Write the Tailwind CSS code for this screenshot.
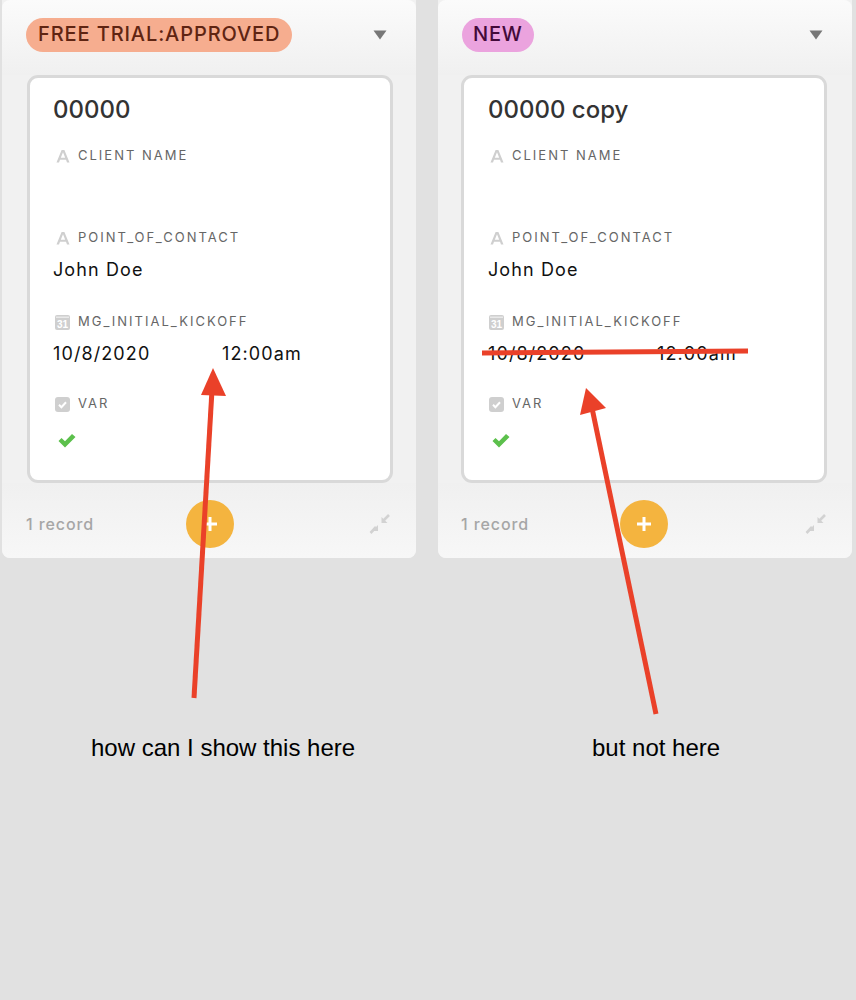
<!doctype html>
<html>
<head>
<meta charset="utf-8">
<script src="https://cdn.jsdelivr.net/npm/@tailwindcss/browser@4"></script>
</head>
<body class="relative w-[856px] h-[1000px] overflow-hidden bg-[#e1e1e1] font-['Inter',sans-serif]">

<div class="flex gap-[22px] pl-[2px]">

  <!-- left column -->
  <div class="w-[414px] h-[558px] rounded-b-lg flex flex-col bg-[#f1f1f1]">
    <div class="h-[75px] shrink-0 pl-6 pr-[29px] pt-[18px] flex items-start justify-between rounded-t-lg bg-gradient-to-b from-[#fbfbfb] to-[#f0f0f0]">
      <span class="h-[34px] px-3 rounded-full bg-[#f6ad8f] text-[#5f2412] text-[20px] leading-[32px] font-medium tracking-[0.9px] whitespace-nowrap">FREE TRIAL:APPROVED</span>
      <svg class="mt-3" width="14" height="10" viewBox="0 0 14 10"><path d="M0.5 0.5H13.5L7 9.5Z" fill="#777"/></svg>
    </div>
    <div class="ml-[25px] mr-[23px] h-[408px] shrink-0 rounded-[11px] border-[3px] border-[#d9d9d9] bg-white pl-6 pt-[17px]">
      <div class="-ml-px text-[24px] leading-[30px] font-medium text-[#333]">00000</div>
      <div class="mt-[21px] flex items-center h-5 text-[13px] tracking-[2px] text-[#666]">
        <svg class="ml-[2px] mr-[8px]" width="14" height="14" viewBox="0 0 14 14"><path d="M5.6 1H8.4L13.5 13.5H11L10 10.8H4L3 13.5H0.5ZM4.8 8.7H9.2L7 3.2Z" fill="#cfcfcf" fill-rule="evenodd"/></svg>
        CLIENT NAME
      </div>
      <div class="mt-[62px] flex items-center h-5 text-[13px] tracking-[2px] text-[#666]">
        <svg class="ml-[2px] mr-[8px]" width="14" height="14" viewBox="0 0 14 14"><path d="M5.6 1H8.4L13.5 13.5H11L10 10.8H4L3 13.5H0.5ZM4.8 8.7H9.2L7 3.2Z" fill="#cfcfcf" fill-rule="evenodd"/></svg>
        POINT_OF_CONTACT
      </div>
      <div class="mt-[10px] -ml-px text-[18px] leading-6 tracking-[1.1px] text-[#111]">John Doe</div>
      <div class="mt-[30px] flex items-center h-5 text-[13px] tracking-[2px] text-[#666]">
        <svg class="ml-[1px] mr-[8px]" width="15" height="15" viewBox="0 0 15 15"><rect width="15" height="15" rx="2" fill="#cfcfcf"/><rect x="1" y="1.5" width="13" height="1.5" fill="#e9e9e9"/><text x="2" y="12.8" font-size="10" font-weight="700" letter-spacing="0" fill="#fff" font-family="Liberation Sans">31</text></svg>
        MG_INITIAL_KICKOFF
      </div>
      <div class="mt-[10px] -ml-px flex text-[18px] leading-6 tracking-[1.1px] text-[#111]">
        <span class="w-[169px]">10/8/2020</span><span>12:00am</span>
      </div>
      <div class="mt-[28px] flex items-center h-5 text-[13px] tracking-[2px] text-[#666]">
        <svg class="ml-[1px] mr-[8px]" width="15" height="15" viewBox="0 0 15 15"><rect width="15" height="15" rx="3" fill="#cfcfcf"/><path d="M4 7.8L6.4 10.2L11 5.3" fill="none" stroke="#fff" stroke-width="2"/></svg>
        VAR
      </div>
      <svg class="mt-[19px] ml-[4px]" width="18" height="15" viewBox="0 0 18 15"><path d="M0.5 8L3.5 5L7 8.3L14 1L17.5 4L7 14.5Z" fill="#5cc04c"/></svg>
    </div>
    <div class="relative flex-1 flex items-center justify-between pl-6 pr-[25px] pt-[7px] rounded-b-lg bg-gradient-to-b from-[#f0f0f0] to-[#f7f7f7]">
      <span class="text-[16px] font-medium tracking-[0.9px] text-[#a6a6a6]">1 record</span>
      <svg width="22" height="22" viewBox="0 0 22 22" fill="#d2d2d2"><path d="M12.5 4V10H18.5Z"/><path d="M14 8L20 2" stroke="#d2d2d2" stroke-width="2.6"/><path d="M9 12V18H3Z"/><path d="M7 14L1.5 20" stroke="#d2d2d2" stroke-width="2.6"/></svg>
      <div class="absolute left-[184px] top-[17px] w-12 h-12 rounded-full bg-[#f4b43f] flex items-center justify-center">
        <svg width="16" height="16" viewBox="0 0 16 16"><path d="M8 1V15M1 8H15" stroke="#fff" stroke-width="3"/></svg>
      </div>
    </div>
  </div>

  <!-- right column -->
  <div class="w-[414px] h-[558px] rounded-b-lg flex flex-col bg-[#f1f1f1]">
    <div class="h-[75px] shrink-0 pl-6 pr-[29px] pt-[18px] flex items-start justify-between rounded-t-lg bg-gradient-to-b from-[#fbfbfb] to-[#f0f0f0]">
      <span class="h-[34px] px-[11px] rounded-full bg-[#eba3de] text-[#430a3a] text-[20px] leading-[32px] font-medium tracking-[0.75px] whitespace-nowrap">NEW</span>
      <svg class="mt-3" width="14" height="10" viewBox="0 0 14 10"><path d="M0.5 0.5H13.5L7 9.5Z" fill="#777"/></svg>
    </div>
    <div class="ml-[23px] mr-[25px] h-[408px] shrink-0 rounded-[11px] border-[3px] border-[#d9d9d9] bg-white pl-6 pt-[17px]">
      <div class="text-[24px] leading-[30px] font-medium text-[#333]">00000 copy</div>
      <div class="mt-[21px] flex items-center h-5 text-[13px] tracking-[2px] text-[#666]">
        <svg class="ml-[2px] mr-[8px]" width="14" height="14" viewBox="0 0 14 14"><path d="M5.6 1H8.4L13.5 13.5H11L10 10.8H4L3 13.5H0.5ZM4.8 8.7H9.2L7 3.2Z" fill="#cfcfcf" fill-rule="evenodd"/></svg>
        CLIENT NAME
      </div>
      <div class="mt-[62px] flex items-center h-5 text-[13px] tracking-[2px] text-[#666]">
        <svg class="ml-[2px] mr-[8px]" width="14" height="14" viewBox="0 0 14 14"><path d="M5.6 1H8.4L13.5 13.5H11L10 10.8H4L3 13.5H0.5ZM4.8 8.7H9.2L7 3.2Z" fill="#cfcfcf" fill-rule="evenodd"/></svg>
        POINT_OF_CONTACT
      </div>
      <div class="mt-[10px] text-[18px] leading-6 tracking-[1.1px] text-[#111]">John Doe</div>
      <div class="mt-[30px] flex items-center h-5 text-[13px] tracking-[2px] text-[#666]">
        <svg class="ml-[1px] mr-[8px]" width="15" height="15" viewBox="0 0 15 15"><rect width="15" height="15" rx="2" fill="#cfcfcf"/><rect x="1" y="1.5" width="13" height="1.5" fill="#e9e9e9"/><text x="2" y="12.8" font-size="10" font-weight="700" letter-spacing="0" fill="#fff" font-family="Liberation Sans">31</text></svg>
        MG_INITIAL_KICKOFF
      </div>
      <div class="mt-[10px] flex text-[18px] leading-6 tracking-[1.1px] text-[#111]">
        <span class="w-[169px]">10/8/2020</span><span>12:00am</span>
      </div>
      <div class="mt-[28px] flex items-center h-5 text-[13px] tracking-[2px] text-[#666]">
        <svg class="ml-[1px] mr-[8px]" width="15" height="15" viewBox="0 0 15 15"><rect width="15" height="15" rx="3" fill="#cfcfcf"/><path d="M4 7.8L6.4 10.2L11 5.3" fill="none" stroke="#fff" stroke-width="2"/></svg>
        VAR
      </div>
      <svg class="mt-[19px] ml-[4px]" width="18" height="15" viewBox="0 0 18 15"><path d="M0.5 8L3.5 5L7 8.3L14 1L17.5 4L7 14.5Z" fill="#5cc04c"/></svg>
    </div>
    <div class="relative flex-1 flex items-center justify-between pl-[23px] pr-[25px] pt-[7px] rounded-b-lg bg-gradient-to-b from-[#f0f0f0] to-[#f7f7f7]">
      <span class="text-[16px] font-medium tracking-[0.9px] text-[#a6a6a6]">1 record</span>
      <svg width="22" height="22" viewBox="0 0 22 22" fill="#d2d2d2"><path d="M12.5 4V10H18.5Z"/><path d="M14 8L20 2" stroke="#d2d2d2" stroke-width="2.6"/><path d="M9 12V18H3Z"/><path d="M7 14L1.5 20" stroke="#d2d2d2" stroke-width="2.6"/></svg>
      <div class="absolute left-[182px] top-[17px] w-12 h-12 rounded-full bg-[#f4b43f] flex items-center justify-center">
        <svg width="16" height="16" viewBox="0 0 16 16"><path d="M8 1V15M1 8H15" stroke="#fff" stroke-width="3"/></svg>
      </div>
    </div>
  </div>

</div>

<!-- annotations drawn on top of the screenshot -->
<svg class="absolute left-0 top-0" width="856" height="1000" viewBox="0 0 856 1000">
  <path d="M194 698L212 390" stroke="#ea4129" stroke-width="5" fill="none"/>
  <path d="M213 368L226 396L201 395Z" fill="#ea4129"/>
  <path d="M656 714L592 408" stroke="#ea4129" stroke-width="5" fill="none"/>
  <path d="M586 388L606 408L580 415Z" fill="#ea4129"/>
  <path d="M482 353L748 351" stroke="#ea4129" stroke-width="5" fill="none"/>
</svg>
<div class="absolute left-[91px] top-[734px] text-[24px] leading-7 text-black font-['Liberation_Sans',sans-serif] whitespace-nowrap">how can I show this here</div>
<div class="absolute left-[592px] top-[734px] text-[24px] leading-7 text-black font-['Liberation_Sans',sans-serif] whitespace-nowrap">but not here</div>

</body>
</html>
